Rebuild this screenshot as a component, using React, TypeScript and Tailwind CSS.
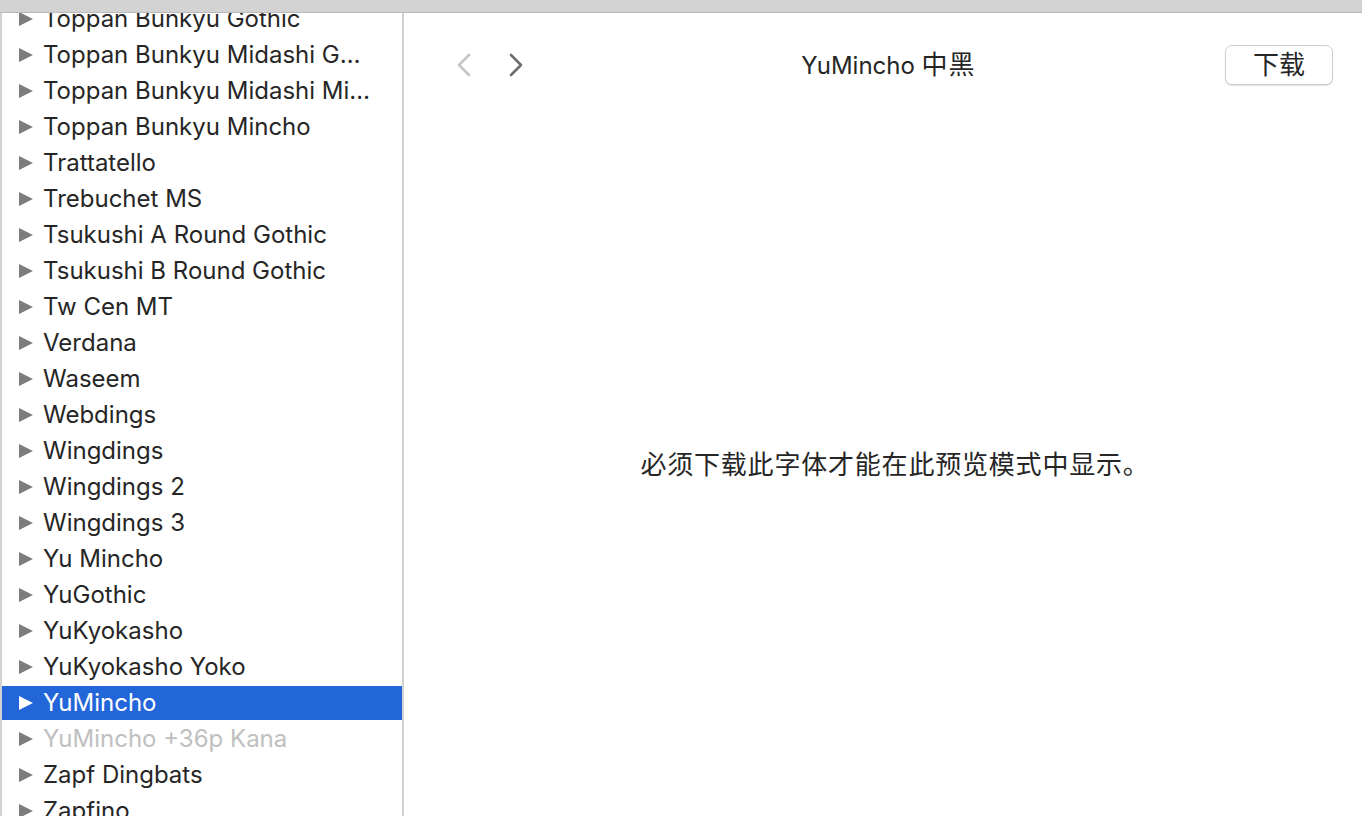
import React from "react";

const fonts = [
  "Toppan Bunkyu Gothic",
  "Toppan Bunkyu Midashi G…",
  "Toppan Bunkyu Midashi Mi…",
  "Toppan Bunkyu Mincho",
  "Trattatello",
  "Trebuchet MS",
  "Tsukushi A Round Gothic",
  "Tsukushi B Round Gothic",
  "Tw Cen MT",
  "Verdana",
  "Waseem",
  "Webdings",
  "Wingdings",
  "Wingdings 2",
  "Wingdings 3",
  "Yu Mincho",
  "YuGothic",
  "YuKyokasho",
  "YuKyokasho Yoko",
  "YuMincho",
  "YuMincho +36p Kana",
  "Zapf Dingbats",
  "Zapfino",
];

const SELECTED = "YuMincho";
const DISABLED = "YuMincho +36p Kana";

function Disclosure({ color }: { color: string }) {
  return (
    <svg width="16" height="16" viewBox="0 0 16 16" className="shrink-0">
      <polygon points="1,1 15,8 1,15" fill={color} />
    </svg>
  );
}

function FontRow({ name }: { name: string }) {
  const selected = name === SELECTED;
  const disabled = name === DISABLED;

  return (
    <div className="h-[36px] py-[1px]">
      <div
        className={
          "flex h-full items-center pl-[16px] " +
          (selected ? "bg-[#2366d9] text-white" : disabled ? "text-[#c0c0c0]" : "text-[#262626]")
        }
      >
        <Disclosure color={selected ? "#ffffff" : "#7d7d7d"} />
        <span className="ml-[9px] whitespace-nowrap">{name}</span>
      </div>
    </div>
  );
}

function Chevron({ dir, color }: { dir: "left" | "right"; color: string }) {
  return (
    <svg width="16" height="24" viewBox="0 0 16 24">
      <path
        d={dir === "left" ? "M13 2 L3 12 L13 22" : "M3 2 L13 12 L3 22"}
        fill="none"
        stroke={color}
        strokeWidth="2.6"
        strokeLinecap="round"
        strokeLinejoin="round"
      />
    </svg>
  );
}

export default function App() {
  return (
    <div
      className="flex h-[816px] w-[1362px] flex-col overflow-hidden bg-white text-[24px] leading-none"
      style={{ fontFamily: 'Inter, "Noto Sans CJK SC", sans-serif' }}
    >
      <div className="relative z-10 h-[13px] shrink-0 border-b border-[#bababa] bg-[#d3d3d3]" />

      <div className="flex min-h-0 flex-1">
        {/* font list */}
        <div className="w-[404px] shrink-0 overflow-hidden border-l-2 border-r-2 border-[#d2d2d2]">
          <div className="-mt-[12px]">
            {fonts.map((f) => (
              <FontRow key={f} name={f} />
            ))}
          </div>
        </div>

        {/* preview pane */}
        <div className="flex min-w-0 flex-1 flex-col">
          <div className="flex h-[104px] shrink-0 items-center pl-[52px] pr-[29px]">
            <div className="flex items-center gap-[36px]">
              <Chevron dir="left" color="#c4c4c4" />
              <Chevron dir="right" color="#6d6d6d" />
            </div>
            <div className="flex-1 pl-[28px] text-center text-[#262626]">
              YuMincho <span className="text-[26px] tracking-[1px]">中黑</span>
            </div>
            <button className="flex h-[40px] w-[108px] items-center justify-center rounded-[7px] border border-[#cdcdcd] bg-white text-[26px] text-[#262626] shadow-[0_1px_1px_rgba(0,0,0,0.12)]">
              下载
            </button>
          </div>
          <div className="flex flex-1 items-center justify-center pb-[4px] pl-[24px] text-[26px] tracking-[0.8px] text-[#262626]">
            必须下载此字体才能在此预览模式中显示。
          </div>
        </div>
      </div>
    </div>
  );
}
